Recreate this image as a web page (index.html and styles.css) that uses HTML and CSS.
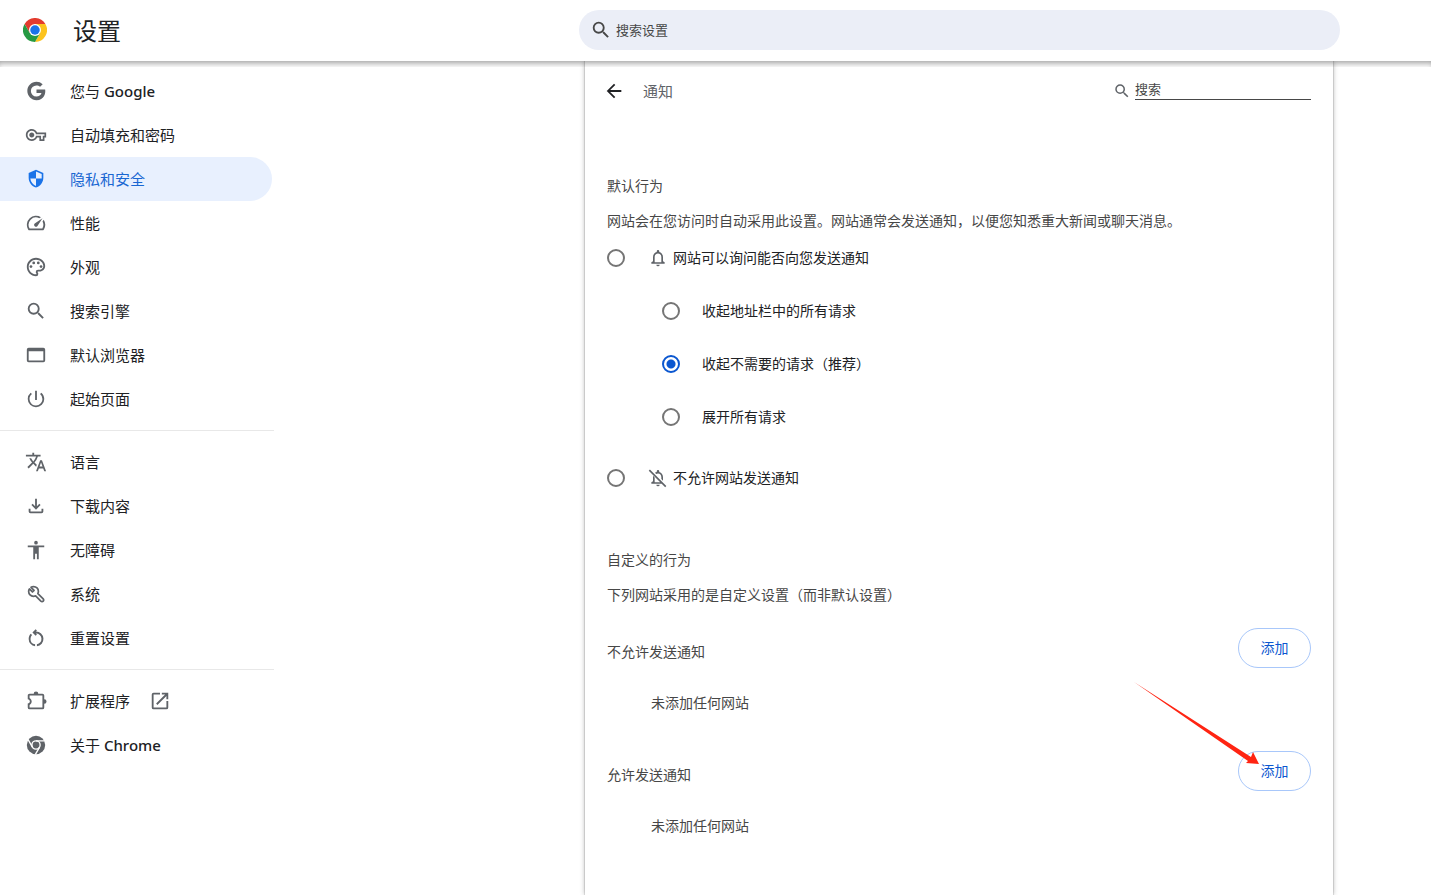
FILE: index.html
```html
<!DOCTYPE html>
<html lang="zh-CN">
<head>
<meta charset="utf-8">
<meta name="viewport" content="width=device-width, initial-scale=1">
<title>设置</title>
<link rel="stylesheet" href="styles.css">
</head>
<body>
<header class="toolbar">
  <div class="brand">
    <svg class="brand-logo" viewBox="0 0 48 48" aria-hidden="true">
      <path fill="#e33b2e" d="M24 12h20.800A24 24 0 0 0 3.200 12l10.400 18z"/>
      <path fill="#fcc31e" d="M34.400 30 24 48A24 24 0 0 0 44.800 12H24z"/>
      <path fill="#269a43" d="M13.600 30 3.200 12A24 24 0 0 0 24 48l10.400-18z"/>
      <circle cx="24" cy="24" r="12" fill="#fff"/>
      <circle cx="24" cy="24" r="9.500" fill="#1a73e8"/>
    </svg>
    <h1 class="brand-title">设置</h1>
  </div>
  <label class="search-box">
    <svg class="search-box-icon" viewBox="0 0 24 24" aria-hidden="true"><path d="M15.500 14h-.79l-.28-.27A6.470 6.470 0 0 0 16 9.500 6.500 6.500 0 1 0 9.500 16c1.610 0 3.090-.59 4.230-1.570l.27.28v.79l5 4.990L20.490 19l-4.990-5zm-6 0C7.010 14 5 11.990 5 9.500S7.010 5 9.500 5 14 7.010 14 9.500 11.990 14 9.500 14z"/></svg>
    <input class="search-box-input" type="search" placeholder="搜索设置" aria-label="搜索设置">
  </label>
</header>

<div class="layout">
  <nav class="menu" aria-label="设置">
    <a class="menu-item" href="#people"><svg class="icon" viewBox="0 0 24 24"><path d="M12.545 10.239v3.821h5.445c-.712 2.315-2.647 3.972-5.445 3.972a6.033 6.033 0 1 1 0-12.064c1.498 0 2.866.549 3.921 1.453l2.814-2.814A9.969 9.969 0 0 0 12.545 2C7.021 2 2.543 6.477 2.543 12s4.478 10 10.002 10c8.396 0 10.249-7.850 9.426-11.748z"/></svg><span>您与 <span class="latin">Google</span></span></a>
    <a class="menu-item" href="#autofill"><svg class="icon" viewBox="-1 -1 26 26"><path d="M22 19h-6v-4h-2.680c-1.140 2.420-3.600 4-6.320 4-3.860 0-7-3.140-7-7s3.140-7 7-7c2.720 0 5.170 1.580 6.320 4H24v6h-2v4zm-4-2h2v-4h2v-2H11.940l-.23-.67C11.010 8.340 9.110 7 7 7c-2.760 0-5 2.240-5 5s2.240 5 5 5c2.110 0 4.010-1.340 4.710-3.330l.23-.67H18v4zM7 15c-1.650 0-3-1.350-3-3s1.350-3 3-3 3 1.350 3 3-1.350 3-3 3z"/></svg><span>自动填充和密码</span></a>
    <a class="menu-item menu-item-current" href="#privacy" aria-current="page"><svg class="icon" viewBox="-1.500 -1 27 27"><path fill-rule="evenodd" d="M12 1L3 5v6c0 5.550 3.840 10.740 9 12 5.160-1.260 9-6.450 9-12V5l-9-4zm0 2.200 7 3.100V12h-7V3.200zM12 12H5c.53 4.120 3.280 7.800 7 8.940V12z"/></svg><span>隐私和安全</span></a>
    <a class="menu-item" href="#performance"><svg class="icon" viewBox="0 0 24 24"><path d="M20.380 8.570l-1.230 1.850a8 8 0 0 1-.22 7.580H5.070A8 8 0 0 1 15.580 6.850l1.850-1.230A10 10 0 0 0 3.350 19a2 2 0 0 0 1.720 1h13.850a2 2 0 0 0 1.740-1 10 10 0 0 0-.27-10.440zm-9.790 6.840a2 2 0 0 0 2.830 0l5.660-8.490-8.490 5.660a2 2 0 0 0 0 2.830z"/></svg><span>性能</span></a>
    <a class="menu-item" href="#appearance"><svg class="icon" viewBox="0 0 24 24"><path d="M12 22C6.490 22 2 17.510 2 12S6.490 2 12 2s10 4.040 10 9c0 3.310-2.690 6-6 6h-1.770c-.28 0-.5.22-.5.5 0 .12.050.23.130.33.410.47.640 1.060.640 1.670A2.500 2.500 0 0 1 12 22zm0-18c-4.410 0-8 3.590-8 8s3.590 8 8 8c.28 0 .5-.22.5-.5a.54.54 0 0 0-.14-.35c-.41-.46-.63-1.050-.63-1.650a2.500 2.500 0 0 1 2.500-2.500H16c2.210 0 4-1.790 4-4 0-3.860-3.590-7-8-7z"/><circle cx="6.500" cy="11.500" r="1.500"/><circle cx="9.500" cy="7.500" r="1.500"/><circle cx="14.500" cy="7.500" r="1.500"/><circle cx="17.500" cy="11.500" r="1.500"/></svg><span>外观</span></a>
    <a class="menu-item" href="#search"><svg class="icon" viewBox="0 0 24 24"><path d="M15.500 14h-.79l-.28-.27A6.470 6.470 0 0 0 16 9.500 6.500 6.500 0 1 0 9.500 16c1.610 0 3.090-.59 4.230-1.570l.27.28v.79l5 4.990L20.490 19l-4.990-5zm-6 0C7.010 14 5 11.990 5 9.500S7.010 5 9.500 5 14 7.010 14 9.500 11.990 14 9.500 14z"/></svg><span>搜索引擎</span></a>
    <a class="menu-item" href="#default-browser"><svg class="icon" viewBox="0 0 24 24"><path d="M20 4H4a2 2 0 0 0-2 2v12a2 2 0 0 0 2 2h16a2 2 0 0 0 2-2V6a2 2 0 0 0-2-2zm0 14H4V8h16v10z"/></svg><span>默认浏览器</span></a>
    <a class="menu-item" href="#on-startup"><svg class="icon" viewBox="0 0 24 24"><path d="M13 3h-2v10h2V3zm4.830 2.170l-1.420 1.420A6.920 6.920 0 0 1 19 12c0 3.870-3.130 7-7 7A6.995 6.995 0 0 1 7.580 6.580L6.170 5.170A8.932 8.932 0 0 0 3 12a9 9 0 0 0 18 0c0-2.740-1.230-5.180-3.170-6.830z"/></svg><span>起始页面</span></a>
    <hr class="menu-divider">
    <a class="menu-item" href="#languages"><svg class="icon" viewBox="0 0 24 24"><path d="M12.870 15.070l-2.540-2.510.03-.03A17.520 17.520 0 0 0 14.070 6H17V4h-7V2H8v2H1v1.990h11.170C11.500 7.920 10.440 9.750 9 11.350 8.070 10.320 7.300 9.190 6.690 8h-2c.73 1.630 1.730 3.170 2.980 4.560l-5.090 5.020L4 19l5-5 3.110 3.110.76-2.040zM18.500 10h-2L12 22h2l1.120-3h4.750L21 22h2l-4.500-12zm-2.620 7l1.620-4.330L19.120 17h-3.240z"/></svg><span>语言</span></a>
    <a class="menu-item" href="#downloads"><svg class="icon" viewBox="0 0 24 24"><path d="M12 16l-5-5 1.400-1.450 2.600 2.600V4h2v8.150l2.600-2.600L17 11l-5 5zm-6 4a2 2 0 0 1-2-2v-3h2v3h12v-3h2v3a2 2 0 0 1-2 2H6z"/></svg><span>下载内容</span></a>
    <a class="menu-item" href="#accessibility"><svg class="icon" viewBox="0 0 24 24"><path d="M12 2a2 2 0 1 1 0 4 2 2 0 0 1 0-4zm9 7h-6v13h-2v-6h-2v6H9V9H3V7h18v2z"/></svg><span>无障碍</span></a>
    <a class="menu-item" href="#system"><svg class="icon" viewBox="0 0 24 24"><path fill="none" stroke="currentColor" stroke-width="1.900" stroke-linejoin="round" d="M17.300 19.700 11.600 14q-.6.250-1.200.4-.6.150-1.200.150-2.200 0-3.700-1.500T4 9.300q0-.8.200-1.500.2-.7.600-1.300l3.300 3.300 1.800-1.800-3.300-3.300q.6-.4 1.300-.6.700-.2 1.500-.2 2.200 0 3.700 1.500t1.500 3.700q0 .7-.150 1.300t-.4 1.200l5.800 5.700q.5.500.5 1.200t-.5 1.200q-.5.500-1.250.500t-1.300-.5z"/></svg><span>系统</span></a>
    <a class="menu-item" href="#reset"><svg class="icon" viewBox="0 0 24 24"><path d="M11 20.950A8.010 8.010 0 0 1 4 13c0-2.160.86-4.120 2.260-5.560l1.420 1.420A5.980 5.980 0 0 0 6 13a6 6 0 0 0 5 5.910v2.040zm2 0v-2.040A6 6 0 0 0 12 7h-.1l1.100 1.100-1.400 1.400L8.100 6l3.500-3.500L13 3.900 11.900 5H12a8 8 0 0 1 1 15.950z"/></svg><span>重置设置</span></a>
    <hr class="menu-divider">
    <a class="menu-item" href="#extensions"><svg class="icon" viewBox="0 0 24 24"><path d="M9.500 4a2.500 2.500 0 0 1 5 0H19a2 2 0 0 1 2 2v4a2.500 2.500 0 0 1 0 5v4a2 2 0 0 1-2 2H5a2 2 0 0 1-2-2v-4.200c1.400-.3 2.300-1.200 2.300-2.300S4.400 10.500 3 10.200V6c0-1.100.9-2 2-2h4.500zM5 6v2.700c1.400.8 2.300 2.200 2.300 3.800S6.400 15.500 5 16.300V19h14V6H5z"/></svg><span>扩展程序</span><svg class="icon icon-external" viewBox="0 0 24 24"><path d="M19 19H5V5h7V3H5a2 2 0 0 0-2 2v14a2 2 0 0 0 2 2h14a2 2 0 0 0 2-2v-7h-2v7zM14 3v2h3.590l-9.830 9.830 1.410 1.410L19 6.410V10h2V3h-7z"/></svg></a>
    <a class="menu-item" href="#help"><svg class="icon" viewBox="0 0 24 24"><circle cx="12" cy="12" r="10"/><g fill="none" stroke="#fff" stroke-width="1.500"><circle cx="12" cy="12" r="4.500"/><path d="M12 7.500h9.500M8.100 14.250 3.400 6.100M15.900 14.250 11.200 22.400"/></g></svg><span>关于 <span class="latin">Chrome</span></span></a>
  </nav>

  <main class="page">
    <div class="page-head">
      <button class="back" type="button" aria-label="返回"><svg class="back-icon" viewBox="0 0 24 24"><path d="M20 11H7.830l5.590-5.590L12 4l-8 8 8 8 1.410-1.410L7.830 13H20v-2z"/></svg></button>
      <h2 class="page-title">通知</h2>
      <label class="site-search">
        <svg class="site-search-icon" viewBox="0 0 24 24" aria-hidden="true"><path d="M15.500 14h-.79l-.28-.27A6.470 6.470 0 0 0 16 9.500 6.500 6.500 0 1 0 9.500 16c1.610 0 3.090-.59 4.230-1.570l.27.28v.79l5 4.990L20.490 19l-4.990-5zm-6 0C7.010 14 5 11.990 5 9.500S7.010 5 9.500 5 14 7.010 14 9.500 11.990 14 9.500 14z"/></svg>
        <input class="site-search-input" type="search" placeholder="搜索" aria-label="搜索">
      </label>
    </div>

    <section class="section">
      <h3 class="section-title">默认行为</h3>
      <p class="section-text">网站会在您访问时自动采用此设置。网站通常会发送通知，以便您知悉重大新闻或聊天消息。</p>
      <div class="choices">
        <label class="choice">
          <input class="radio" type="radio" name="default">
          <svg class="choice-icon" viewBox="0 0 24 24"><path d="M12 22a2 2 0 0 0 2-2h-4a2 2 0 0 0 2 2zm6-6v-5c0-3.070-1.630-5.640-4.500-6.320V4a1.500 1.500 0 0 0-3 0v.68C7.640 5.360 6 7.920 6 11v5l-2 1v2h16v-2l-2-1zm-2 1H8v-6c0-2.480 1.510-4.500 4-4.500s4 2.020 4 4.500v6z"/></svg>
          <span>网站可以询问能否向您发送通知</span>
        </label>
        <div class="subchoices">
          <label class="subchoice"><input class="radio" type="radio" name="prompt"><span>收起地址栏中的所有请求</span></label>
          <label class="subchoice"><input class="radio" type="radio" name="prompt" checked><span>收起不需要的请求（推荐）</span></label>
          <label class="subchoice"><input class="radio" type="radio" name="prompt"><span>展开所有请求</span></label>
        </div>
        <label class="choice">
          <input class="radio" type="radio" name="default">
          <svg class="choice-icon" viewBox="0 0 24 24"><path d="M12 22a2 2 0 0 0 2-2h-4a2 2 0 0 0 2 2zM6 9.300V16l-2 1v2h13l-2-2H8v-5.700zM18 15.200V11c0-3.070-1.630-5.640-4.500-6.320V4a1.500 1.500 0 0 0-3 0v.68c-.8.200-1.500.5-2.100 1l1.450 1.450C10.450 6.730 11.200 6.500 12 6.500c2.490 0 4 2.020 4 4.500v2.200zM2.300 1.900.9 3.300l19.700 19.700 1.400-1.400z"/></svg>
          <span>不允许网站发送通知</span>
        </label>
      </div>
    </section>

    <section class="section section-custom">
      <h3 class="section-title">自定义的行为</h3>
      <p class="section-text">下列网站采用的是自定义设置（而非默认设置）</p>
      <div class="site-list">
        <div class="site-list-head">
          <h4 class="site-list-title">不允许发送通知</h4>
          <button class="add" type="button">添加</button>
        </div>
        <p class="site-list-empty">未添加任何网站</p>
      </div>
      <div class="site-list">
        <div class="site-list-head">
          <h4 class="site-list-title">允许发送通知</h4>
          <button class="add" type="button">添加</button>
          <svg class="pointer" viewBox="0 0 126 84" aria-hidden="true">
            <path fill="#ff2412" d="M0 0 117 75 119 70 125 82 112 81 114 79z"/>
          </svg>
        </div>
        <p class="site-list-empty">未添加任何网站</p>
      </div>
    </section>
  </main>
</div>
</body>
</html>
```
FILE: styles.css
```css
* {
  box-sizing: border-box;
}

body {
  margin: 0;
  min-height: 100vh;
  display: flex;
  flex-direction: column;
  background: #fff;
  color: #202124;
  font: 14px/20px "Open Sans", "Noto Sans CJK SC", sans-serif;
}

h1, h2, h3, h4, p {
  margin: 0;
  font-weight: 400;
}

svg {
  flex: none;
  fill: currentColor;
}

input, button {
  font: inherit;
}

input::placeholder {
  color: #474747;
  opacity: 1;
}

.toolbar {
  position: relative;
  z-index: 1;
  display: flex;
  align-items: center;
  justify-content: space-between;
  height: 61px;
  padding: 0 91px 2px 23px;
  background: #fff;
}

.toolbar::after {
  content: "";
  position: absolute;
  inset: 100% 0 auto;
  height: 6px;
  box-shadow: inset 0 5px 6px -3px rgba(0, 0, 0, 0.4);
  pointer-events: none;
}

.brand {
  display: flex;
  align-items: center;
  gap: 26px;
}

.brand-logo {
  width: 24px;
  height: 24px;
}

.brand-title {
  padding-top: 2px;
  font-size: 24px;
  line-height: 32px;
}

.search-box {
  display: flex;
  align-items: center;
  gap: 4px;
  width: 761px;
  height: 40px;
  padding: 0 20px 0 11px;
  border-radius: 20px;
  background: #ebeef7;
  color: #474747;
}

.search-box-icon {
  width: 22px;
  height: 22px;
}

.search-box-input {
  flex: 1;
  min-width: 0;
  padding: 0;
  border: 0;
  outline: 0;
  background: none;
  font-size: 13px;
}

.layout {
  flex: 1;
  display: grid;
  grid-template-columns: 274px 1fr minmax(0, 748px) 98px;
}

.menu {
  padding-top: 8px;
  font-size: 15px;
}

.menu-item {
  display: flex;
  align-items: center;
  gap: 23px;
  height: 44px;
  margin-right: 2px;
  padding-left: 25px;
  border-radius: 0 22px 22px 0;
  color: inherit;
  text-decoration: none;
}

.menu-item-current {
  background: #e8f0fe;
  color: #1967d2;
}

.icon {
  width: 22px;
  height: 22px;
  color: #5f6368;
}

.menu-item-current .icon {
  color: #1a73e8;
}

.icon-external {
  margin-left: -4px;
}

.latin {
  font-family: "Noto Sans", sans-serif;
  font-weight: 500;
}

.menu-divider {
  height: 1px;
  margin: 9px 0;
  border: 0;
  background: #e8e8e8;
}

.page {
  grid-column: 3;
  padding: 0 22px 48px;
  background: #fff;
  box-shadow: 0 0 1px rgba(0, 0, 0, 0.5), 0 0 5px rgba(0, 0, 0, 0.3);
}

.page-head {
  display: flex;
  align-items: center;
  height: 60px;
}

.back {
  display: flex;
  margin-left: -4px;
  padding: 0;
  border: 0;
  background: none;
  color: #202124;
}

.back-icon {
  width: 22px;
  height: 22px;
}

.page-title {
  margin-left: 18px;
  color: #5f6368;
  font-size: 15px;
}

.site-search {
  display: flex;
  align-items: center;
  gap: 4px;
  margin-left: auto;
  color: #5f6368;
}

.site-search-icon {
  width: 18px;
  height: 18px;
}

.site-search-input {
  width: 176px;
  height: 22px;
  margin-bottom: 4px;
  padding: 0;
  border: 0;
  border-bottom: 1px solid #474747;
  outline: 0;
  font-size: 13px;
}

.section {
  padding-top: 55px;
  color: #474747;
}

.section-custom {
  padding-top: 52px;
}

.section-title {
  font-size: 14px;
}

.section-text {
  margin-top: 15px;
}

.choices {
  margin-top: 7px;
  color: #202124;
}

.choice {
  display: flex;
  align-items: center;
  height: 40px;
}

.radio {
  appearance: none;
  flex: none;
  width: 18px;
  height: 18px;
  margin: 0;
  border: 2px solid #757575;
  border-radius: 50%;
}

.radio:checked {
  border-color: #0b57d0;
  background: radial-gradient(circle, #0b57d0 0 4px, transparent 5px);
}

.choice-icon {
  width: 20px;
  height: 20px;
  margin: 0 5px 0 23px;
  color: #5f6368;
}

.subchoices {
  margin: 6px 0 15px 55px;
}

.subchoice {
  display: flex;
  align-items: center;
  gap: 22px;
  height: 53px;
}

.site-list {
  margin-top: 23px;
}

.site-list + .site-list {
  margin-top: 38px;
}

.site-list-head {
  position: relative;
  display: flex;
  align-items: center;
  justify-content: space-between;
}

.site-list-title {
  padding-top: 8px;
  font-size: 14px;
}

.add {
  width: 73px;
  height: 40px;
  padding: 0;
  border: 1px solid #a8c7fa;
  border-radius: 20px;
  background: #fff;
  color: #0b57d0;
}

.site-list-empty {
  margin: 25px 0 0 44px;
}

/* Callout arrow drawn over the allow-list button */
.pointer {
  position: absolute;
  top: -69px;
  right: 51px;
  width: 126px;
  height: 84px;
  pointer-events: none;
}
```
